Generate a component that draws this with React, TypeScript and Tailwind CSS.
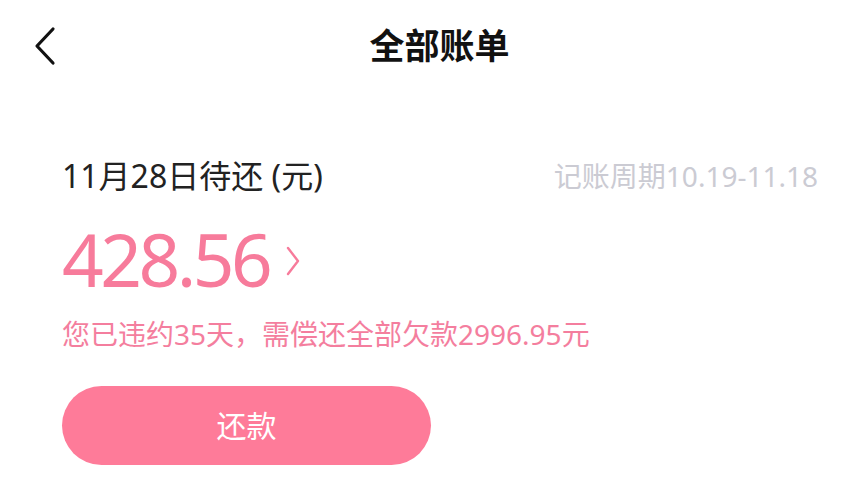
const font = { fontFamily: '"Noto Sans", "Noto Sans CJK SC", sans-serif' };

export default function App() {
  return (
    <div className="w-[845px] h-[500px] bg-white overflow-hidden" style={font}>
      <header className="relative h-[90px] flex items-center justify-center pl-[34px]">
        <button className="absolute left-[30px] top-[24px] w-[30px] h-[44px] flex items-center justify-center">
          <svg width="26" height="40" viewBox="0 0 26 40" fill="none">
            <path d="M21 3 L5 20 L21 37" stroke="#111" strokeWidth="3.2" strokeLinecap="round" strokeLinejoin="round" />
          </svg>
        </button>
        <h1 className="text-[35px] font-bold text-[#111] leading-none">全部账单</h1>
      </header>

      <section className="pl-[62px] pr-[27px] pt-[70px]">
        <div className="flex items-center justify-between">
          <span className="text-[32px] text-[#222] leading-none">11月28日待还 (元)</span>
          <span className="text-[28px] text-[#cbcbd3] leading-none">记账周期10.19-11.18</span>
        </div>

        <div className="mt-[30px] flex items-center gap-[16px]">
          <span className="text-[73px] leading-none text-[#f77b9b] tracking-[-3.5px]">428.56</span>
          <svg width="16" height="32" viewBox="0 0 16 32" fill="none" className="mt-[4px]">
            <path d="M3 3 L13 16 L3 29" stroke="#f77b9b" strokeWidth="2.4" strokeLinecap="round" strokeLinejoin="round" />
          </svg>
        </div>

        <p className="mt-[25px] text-[28px] leading-none text-[#f47e9e]">您已违约35天，需偿还全部欠款2996.95元</p>

        <button className="mt-[38px] w-[369px] h-[79px] rounded-full bg-[#fe7b99] text-white text-[30px] flex items-center justify-center">
          还款
        </button>
      </section>
    </div>
  );
}
